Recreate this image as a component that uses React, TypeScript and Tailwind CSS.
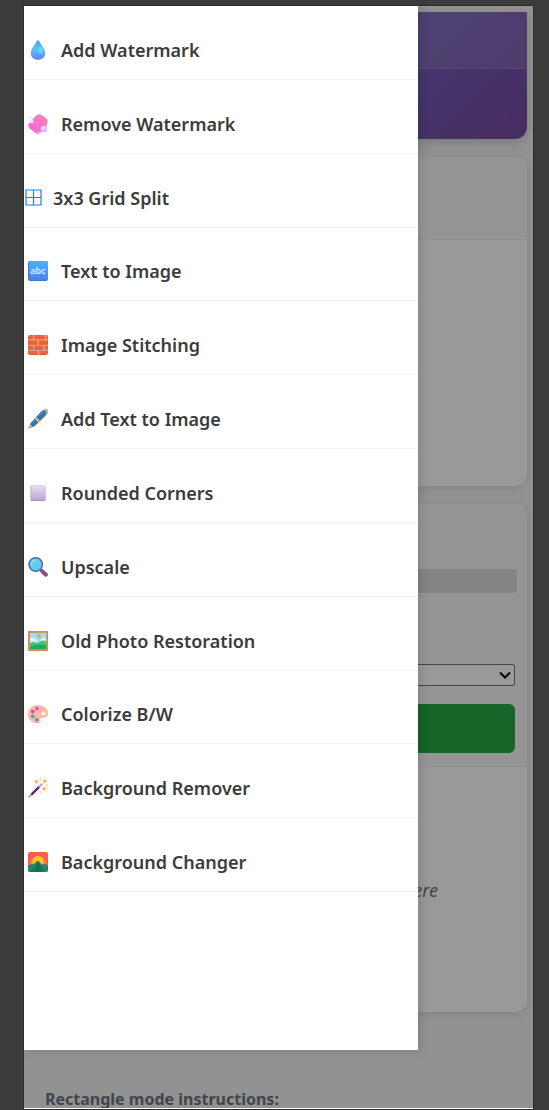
import type { ReactNode } from "react";

function Icon({ children }: { children: ReactNode }) {
  return (
    <svg viewBox="0 0 20 20" className="size-5 shrink-0" aria-hidden="true">
      {children}
    </svg>
  );
}

const droplet = (
  <Icon>
    <defs>
      <linearGradient id="drop" x1="0" y1="0" x2="0" y2="1">
        <stop offset="0" stopColor="#4fa6d8" />
        <stop offset=".45" stopColor="#55c5f8" />
        <stop offset="1" stopColor="#6d7cfb" />
      </linearGradient>
    </defs>
    <path d="M10 .3C9 .3 8.500 1.500 7.600 3.300 6 6.300 2.800 9.200 2.800 13.200c0 4.300 3 6.500 7.200 6.500s7.200-2.200 7.200-6.500c0-4-3.200-6.900-4.800-9.900C11.500 1.500 11 .3 10 .3Z" fill="url(#drop)" />
    <ellipse cx="12.500" cy="10.500" rx="2.500" ry="3.500" fill="#70e4ff" opacity=".55" />
  </Icon>
);

const soap = (
  <Icon>
    <defs>
      <linearGradient id="soap" x1="0" y1="1" x2="1" y2="0">
        <stop offset="0" stopColor="#f65fe2" />
        <stop offset="1" stopColor="#f38ba6" />
      </linearGradient>
    </defs>
    <path d="M1.200 9.200 8.200 1.600Q10.500-.6 13.500.9l4.700 3.300q2 1.800 1.200 4.800l-1.200 4.200-5.600 5.600q-2.200 1.800-4.600.4l-6.400-4.800Q-.6 11.800 1.200 9.200Z" fill="url(#soap)" />
    <path d="m5 9.500 6.500-6.300 4.300 4L9.500 14Z" fill="#fb78d4" opacity=".6" />
    <circle cx="3.500" cy="7.500" r="2" fill="#eadcfb" />
    <circle cx="2" cy="3.500" r="1.500" fill="#eee3fc" />
    <circle cx="16" cy="15" r="3.400" fill="#dfb8fb" />
    <circle cx="15.400" cy="14" r="1.600" fill="#f1dcff" />
    <circle cx="10.500" cy="18.300" r="1" fill="#eec3fb" />
  </Icon>
);

const grid = (
  <svg viewBox="0 0 17 17" className="size-[17px] shrink-0" aria-hidden="true">
    <path d="M1 1h15v15H1ZM8.500 1v15M1 8.500h15" fill="none" stroke="#1683f5" strokeWidth="1.200" />
  </svg>
);

const letters = (
  <Icon>
    <defs>
      <linearGradient id="abc" x1="0" y1="0" x2="0" y2="1">
        <stop offset="0" stopColor="#4dafff" />
        <stop offset="1" stopColor="#4c82e9" />
      </linearGradient>
    </defs>
    <rect width="20" height="20" rx="2" fill="#397ac9" />
    <rect x="1" width="19" height="19" rx="1.800" fill="url(#abc)" />
    <text x="10" y="13" textAnchor="middle" fontFamily="Open Sans, sans-serif" fontSize="9" fontWeight="600" fill="#eef6ff">abc</text>
  </Icon>
);

const bricks = (
  <Icon>
    <rect width="20" height="20" rx="2" fill="#cdb3ad" />
    <g fill="#f0623a">
      <path d="M0 2q0-2 2-2h3v4H0ZM6.200 0h10.600v4H6.200ZM18 0q2 0 2 2v2h-2ZM0 5.200h9.400v4.200H0ZM10.600 5.200H20v4.200h-9.400ZM0 10.600h5v4H0ZM6.200 10.600h9.300v4H6.200ZM16.700 10.600H20v4h-3.300ZM0 15.800h9.900V20H2q-2 0-2-2ZM11.100 15.800H20V18q0 2-2 2h-6.900Z" />
    </g>
    <path d="M0 3.700h5M6.200 3.700h10.600M0 9.100h9.400M10.600 9.100H20M0 14.300h5M6.200 14.300h9.300M2 19.700h7.900M11.100 19.700H18" stroke="#d9432f" strokeWidth=".6" />
  </Icon>
);

const pen = (
  <Icon>
    <path d="M.3 19.700 2.800 13.700 13.500 2.300Q17.500-.6 19.300.5q1.400 2.200-1.300 5.700L6.500 17.200Z" fill="#2e73bd" />
    <path d="M.3 19.700 2.400 15.200l2.300 2.500Z" fill="#efb546" />
    <path d="m6.800 9.700 4 4.200 1.600-1.500L8.400 8.100Z" fill="#f6bd45" />
    <path d="m16.200 1 1.800-.8 1.800.2.100 2.200-1 1.600Z" fill="#e7b44e" />
    <path d="m17.500 4.500 1 1.200-4 4.200" fill="none" stroke="#e2ad48" strokeWidth="1" />
    <path d="M4.500 14 6.500 11.700M10.500 7.500l4.500-4.500" stroke="#528fd0" strokeWidth="1" />
  </Icon>
);

const square = (
  <Icon>
    <defs>
      <linearGradient id="square" x1="0" y1="0" x2="0" y2="1">
        <stop offset="0" stopColor="#e9ddf5" />
        <stop offset="1" stopColor="#bfa6d5" />
      </linearGradient>
    </defs>
    <rect x="2.500" y="2.500" width="15" height="15.500" rx="1" fill="#ad92c5" />
    <rect x="3.200" y="2.500" width="14.300" height="14.300" rx=".8" fill="url(#square)" />
  </Icon>
);

const magnifier = (
  <Icon>
    <path d="m12.500 12.500 5 5" stroke="#795189" strokeWidth="2.500" />
    <path d="m14.200 14.200 3.700 3.500" stroke="#88508f" strokeWidth="4" strokeLinecap="round" />
    <circle cx="7.700" cy="7.500" r="6.700" fill="#62cbed" stroke="#426db0" strokeWidth="1.500" />
    <path d="M3.500 7a4.500 4.500 0 0 1 3.800-4" fill="none" stroke="#94e6fb" strokeWidth="1.600" strokeLinecap="round" />
  </Icon>
);

const picture = (
  <Icon>
    <rect width="20" height="20" rx=".8" fill="#cf8259" />
    <rect x="1.800" y="1.800" width="16.400" height="16.400" fill="#9edcf9" />
    <path d="M2 8q1.500-3 3.500-1 2-.5 2 1.500 2 0 2 2H2ZM12 9q1-2 3-1.500 1-1.500 3-1v5h-6Z" fill="#e2efff" />
    <circle cx="11" cy="5" r="2" fill="#f2a63a" />
    <path d="M2 12.500q4-3 7 0 4.500-4.500 9.200-2v7.700H2Z" fill="#3fca75" />
    <path d="M2 16q6-4 16.200-1.500v3.700H2Z" fill="#23a961" />
    <rect x="1" y="1" width="18" height="18" fill="none" stroke="#d99268" strokeWidth="1" />
  </Icon>
);

const palette = (
  <Icon>
    <path d="M9.500 1C14.800 1 20 4 20 9.400c0 3-2.100 4.300-4.700 4.300h-1.500c-1.600 0-1.900 1.200-1.400 2.400.6 1.700-.1 3.300-2.400 3.300C4.300 19.400 0 15.500 0 10.200 0 4.500 4 1 9.500 1Z" fill="#ffb7a5" />
    <circle cx="15.500" cy="9.500" r="2" fill="#fff" />
    <circle cx="9" cy="4.600" r="1.800" fill="#c157e8" />
    <circle cx="4.700" cy="7.600" r="1.800" fill="#ef3e91" />
    <circle cx="4.800" cy="12.400" r="1.800" fill="#31afae" />
    <circle cx="8.800" cy="15.700" r="1.800" fill="#438ee8" />
  </Icon>
);

const wand = (
  <Icon>
    <path d="m1.300 18.700 12.400-12.400" stroke="#bca9cf" strokeWidth="2.300" strokeLinecap="round" />
    <path d="M3.300 16.700 11 9" stroke="#5a2466" strokeWidth="2.300" />
    <g fill="#f8b04f">
      <path d="m8.500 1 .8 1.800 1.900.8-1.900.8-.8 1.900-.8-1.900-1.900-.8 1.900-.8ZM16.800.3l.8 2 2 .8-2 .8-.8 2-.8-2-2-.8 2-.8ZM16.200 8l.8 2 2 .8-2 .8-.8 2-.8-2-2-.8 2-.8Z" />
      <circle cx="12.200" cy="1.300" r=".8" />
      <circle cx="18.800" cy="7.300" r=".8" />
      <circle cx="12.200" cy="14" r=".8" />
      <circle cx="7.500" cy="8" r=".6" />
    </g>
  </Icon>
);

const sunrise = (
  <Icon>
    <rect width="20" height="20" rx="2" fill="#f65e50" />
    <path d="M2 12a8 8 0 0 1 16 0Z" fill="#fa8535" />
    <circle cx="10" cy="9.500" r="5.500" fill="#ffc629" />
    <path d="M0 13.500q4-2 5.500-1.500L10 8.500l4 4q3-1 6 1V18q0 2-2 2H2q-2 0-2-2Z" fill="#238668" />
    <path d="m10 9 2.500 5 2 .5 1.500 5.500H2l5-4.500Z" fill="#187057" />
  </Icon>
);

const tools = [
  { label: "Add Watermark", icon: droplet },
  { label: "Remove Watermark", icon: soap },
  { label: "3x3 Grid Split", icon: grid, compact: true },
  { label: "Text to Image", icon: letters },
  { label: "Image Stitching", icon: bricks },
  { label: "Add Text to Image", icon: pen },
  { label: "Rounded Corners", icon: square },
  { label: "Upscale", icon: magnifier },
  { label: "Old Photo Restoration", icon: picture },
  { label: "Colorize B/W", icon: palette },
  { label: "Background Remover", icon: wand },
  { label: "Background Changer", icon: sunrise },
];

function Drawer() {
  return (
    <nav
      aria-label="Tools"
      className="absolute top-0 bottom-[58px] left-0 w-[77.4%] bg-white shadow-[2px_0_10px_rgba(0,0,0,0.15)]"
    >
      <ul className="grid h-[886px] auto-rows-fr">
        {tools.map((tool) => (
          <li key={tool.label} className="border-b border-[#f3f3f3]">
            <a
              href="#"
              className={
                tool.compact
                  ? "flex h-full items-center gap-[11px] pt-[15px] pl-px text-[#3b3b3b]"
                  : "flex h-full items-center gap-[13px] pt-[15px] pl-1 text-[#3b3b3b]"
              }
            >
              {tool.icon}
              <span className="text-lg leading-6 font-semibold">{tool.label}</span>
            </a>
          </li>
        ))}
      </ul>
    </nav>
  );
}

export default function App() {
  return (
    <div className="min-h-screen bg-[#3b3b3b] pt-1.5 pr-4 pb-0.5 pl-6 font-['Noto_Sans','Open_Sans',sans-serif]">
      <div className="relative overflow-hidden border-b border-white bg-[#f3f3f3] shadow-[0_0_0_1px_#2c2c2c]">
        <main className="flex flex-col gap-[18px] px-1.5 pt-1.5">
          <header className="h-[127px] rounded-b-xl bg-linear-135 from-[#667eea] to-[#764ba2] shadow-[0_4px_12px_rgba(0,0,0,0.15)]">
            <div className="h-[57px] border-b border-white/10 bg-white/10" />
          </header>

          <section className="flex h-[329px] flex-col overflow-hidden rounded-xl bg-white shadow-[0_2px_10px_rgba(0,0,0,0.1)]">
            <div className="h-[83px] border-b border-[#efefef] bg-[#f8f8f8]" />
          </section>

          <section className="flex h-[508px] flex-col overflow-hidden rounded-xl bg-white shadow-[0_2px_10px_rgba(0,0,0,0.1)]">
            <div className="flex flex-col border-b border-[#efefef] bg-[#f8f8f8] px-2.5 pt-[65px] pb-[13px]">
              <div className="h-6 rounded bg-[#dddddd]" />
              <div className="flex flex-col gap-[18px] px-0.5 pt-[71px]">
                <div className="relative flex">
                  <select
                    aria-label="Mode"
                    className="h-[22px] w-full appearance-none rounded-xs border border-[#767676] bg-white text-sm text-black"
                  />
                  <svg viewBox="0 0 12 8" className="pointer-events-none absolute top-[7px] right-1 h-2 w-3" aria-hidden="true">
                    <path d="m1 1.500 5 5 5-5" fill="none" stroke="#000" strokeWidth="2" />
                  </svg>
                </div>
                <button type="button" aria-label="Start" className="h-[49px] rounded-md bg-[#28a745]" />
              </div>
            </div>
            <p className="flex flex-1 items-center justify-end pr-[89px] text-lg text-[#6c757d] italic">here</p>
          </section>

          <h2 className="mt-[60px] pl-[15px] text-base leading-[18px] font-bold text-[#6c757d]">
            Rectangle mode instructions:
          </h2>
        </main>

        <div className="absolute inset-0 bg-black/40" />
        <Drawer />
      </div>
    </div>
  );
}
